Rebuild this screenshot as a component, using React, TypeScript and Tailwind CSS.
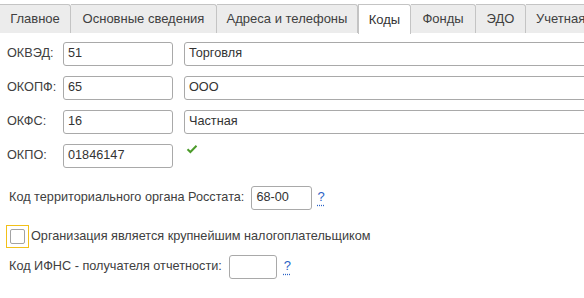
import React from "react";

const tabs = [
  { label: "Главное", w: "w-[71px]" },
  { label: "Основные сведения", w: "w-[146px]" },
  { label: "Адреса и телефоны", w: "w-[141px]" },
  { label: "Коды", w: "w-[53px]", active: true },
  { label: "Фонды", w: "w-[65px]" },
  { label: "ЭДО", w: "w-[50px]" },
];

function Field({ value, w }: { value: string; w: string }) {
  return (
    <div
      className={`${w} h-[24px] shrink-0 border border-[#a9a9a9] rounded-[3px] bg-white flex items-center pl-[4px] text-[#333333]`}
    >
      {value}
    </div>
  );
}

function Help() {
  return (
    <span className="text-[13px] text-[#2b63c6] underline decoration-dotted underline-offset-[3px] leading-none">
      ?
    </span>
  );
}

export default function App() {
  return (
    <div
      className="w-[584px] h-[298px] overflow-hidden bg-white text-[#404040] text-[12.7px]"
      style={{ fontFamily: '"Liberation Sans", Arial, sans-serif' }}
    >
      <div className="h-[33px] pt-[4px] flex border-b border-[#bdbdbd] whitespace-nowrap text-[13px]">
        {tabs.map((t) => (
          <div
            key={t.label}
            className={`${t.w} shrink-0 h-[29px] flex items-center justify-center border-t border-r border-[#c4c4c4] rounded-tr-[3px] ${
              t.active
                ? "bg-white text-[#333333] -mb-[1px] h-[30px] border-l"
                : "bg-[#ececec] text-[#404040]"
            }`}
          >
            {t.label}
          </div>
        ))}
        <div className="w-[80px] shrink-0 h-[29px] flex items-center pl-[10px] border-t border-[#c4c4c4] bg-[#ececec] text-[#404040]">
          Учетная
        </div>
      </div>

      <div className="pt-[9px] flex flex-col gap-[10px]">
        {[
          ["ОКВЭД:", "51", "Торговля"],
          ["ОКОПФ:", "65", "ООО"],
          ["ОКФС:", "16", "Частная"],
        ].map(([l, c, n]) => (
          <div key={l} className="flex items-center">
            <div className="w-[63px] pl-[7px] shrink-0">{l}</div>
            <Field value={c} w="w-[110px]" />
            <div className="w-[11px] shrink-0" />
            <Field value={n} w="w-[420px]" />
          </div>
        ))}
        <div className="flex items-center">
          <div className="w-[63px] pl-[7px] shrink-0">ОКПО:</div>
          <Field value="01846147" w="w-[110px]" />
          <svg className="ml-[13px] mt-[-14px]" width="12" height="10" viewBox="0 0 12 10">
            <path d="M1.5 5.2 L4.4 8 L10.5 1.8" fill="none" stroke="#4c9b2b" strokeWidth="2" />
          </svg>
        </div>
      </div>

      <div className="mt-[18px] flex items-center pl-[9px]">
        <span>Код территориального органа Росстата:</span>
        <div className="ml-[7px]">
          <Field value="68-00" w="w-[61px]" />
        </div>
        <span className="ml-[5px]">
          <Help />
        </span>
      </div>

      <div className="mt-[15px] flex items-center pl-[6px]">
        <div className="w-[23px] h-[23px] border border-[#f2c019] flex items-center justify-center shrink-0">
          <div className="w-[15px] h-[15px] border border-[#a3a3a3] rounded-[2px] bg-white" />
        </div>
        <span className="ml-[2px]">Организация является крупнейшим налогоплательщиком</span>
      </div>

      <div className="mt-[7px] flex items-center pl-[9px]">
        <span>Код ИФНС - получателя отчетности:</span>
        <div className="ml-[7px]">
          <Field value="" w="w-[48px]" />
        </div>
        <span className="ml-[7px]">
          <Help />
        </span>
      </div>
    </div>
  );
}
